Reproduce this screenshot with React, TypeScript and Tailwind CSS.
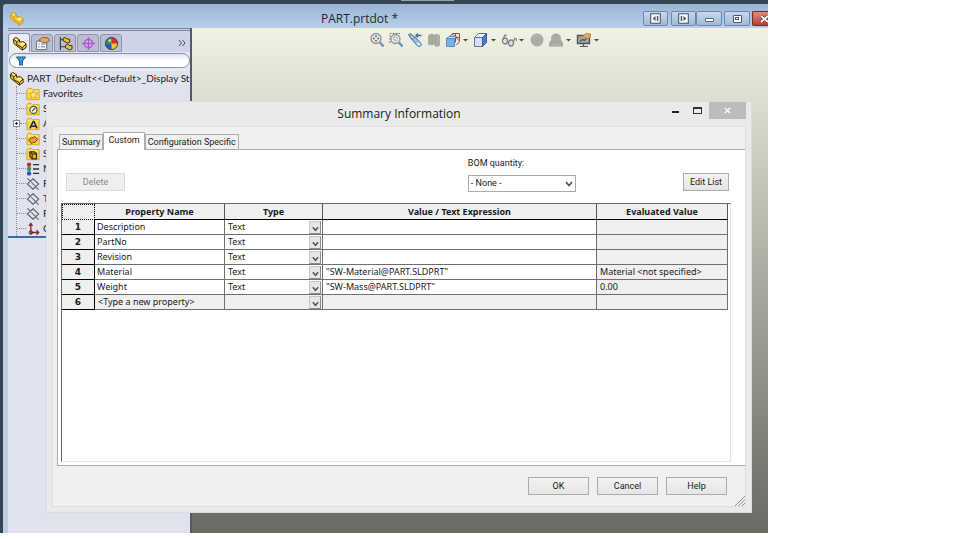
import type { ReactNode } from 'react'

type PropertyRow = {
  name: string
  type: string
  value: string
  evaluated: string
}

const properties: PropertyRow[] = [
  { name: 'Description', type: 'Text', value: '', evaluated: '' },
  { name: 'PartNo', type: 'Text', value: '', evaluated: '' },
  { name: 'Revision', type: 'Text', value: '', evaluated: '' },
  { name: 'Material', type: 'Text', value: '"SW-Material@PART.SLDPRT"', evaluated: 'Material <not specified>' },
  { name: 'Weight', type: 'Text', value: '"SW-Mass@PART.SLDPRT"', evaluated: '0.00' },
]

const treeItems = [
  { id: 'favorites', label: 'Favorites', icon: 'star' },
  { id: 'sensors', label: 'S', icon: 'sensor' },
  { id: 'annotations', label: 'A', icon: 'note', expandable: true },
  { id: 'surfaces', label: 'S', icon: 'surface' },
  { id: 'solids', label: 'S', icon: 'solid' },
  { id: 'material', label: 'M', icon: 'material' },
  { id: 'front', label: 'F', icon: 'plane' },
  { id: 'top', label: 'T', icon: 'plane' },
  { id: 'right', label: 'R', icon: 'plane' },
  { id: 'origin', label: 'O', icon: 'origin' },
]

function Svg({ children, size = 'size-4' }: { children: ReactNode; size?: string }) {
  return (
    <svg viewBox="0 0 16 16" className={`${size} shrink-0`} fill="none" aria-hidden="true">
      {children}
    </svg>
  )
}

function PartIcon({ dark = false, size }: { dark?: boolean; size?: string }) {
  const edge = dark ? '#2d2608' : '#d8961c'
  return (
    <Svg size={size}>
      <path d="M1.500 3.500 4 1.500l4 2.500v2.500l4-.5 3 2.500v4L11 15 2 8z" fill="#f3c52d" stroke={edge} strokeLinejoin="round" />
      <path d="M1.500 3.500 5 6l3-2M5 6v3l6 3.500 4-4M11 12.500V15" stroke={edge} />
      <path d="M3 3.500 4.200 2.500 7 4.200 5 5.200zM7.500 8l4.500-1 2 1.500-3 2.700z" fill="#ffea82" />
    </Svg>
  )
}

function FolderIcon({ children }: { children: ReactNode }) {
  return (
    <Svg size="size-[14px]">
      <path d="M1 3 2.500 1.500H6L7.500 3H15v11.500H1z" fill="#f8d648" stroke="#d0a223" />
      <path d="M2 4.500h12" stroke="#fff2a3" />
      {children}
    </Svg>
  )
}

function TreeIcon({ name }: { name: string }) {
  switch (name) {
    case 'star':
      return (
        <FolderIcon>
          <path d="m8.500 4 1.400 3 3.300.4-2.400 2.300.6 3.300-2.900-1.600L5.600 13l.6-3.300-2.400-2.300 3.300-.4z" fill="#ffe98a" stroke="#e09a1c" />
        </FolderIcon>
      )
    case 'sensor':
      return (
        <FolderIcon>
          <circle cx="8.500" cy="9" r="4" fill="#f6f2d0" stroke="#4c5664" strokeWidth="1.300" />
          <path d="m7 10.500 3.500-3.500" stroke="#3c4654" strokeWidth="1.400" />
        </FolderIcon>
      )
    case 'note':
      return (
        <FolderIcon>
          <path d="m4.500 13 3.700-8h1l3.300 8M6 10.500h5.500" stroke="#1b2350" strokeWidth="1.700" />
        </FolderIcon>
      )
    case 'surface':
      return (
        <FolderIcon>
          <path d="m3 9 3-2.500h2l1.500-1.500 4 3.500L10 12H8l-1.500 1.500z" fill="#f0982d" stroke="#5a3205" />
        </FolderIcon>
      )
    case 'solid':
      return (
        <FolderIcon>
          <path d="M4.500 5.500h5l2.500 2v6H7L4.500 11z" fill="#e8b622" stroke="#2b2404" strokeWidth="1.300" />
          <path d="M7 8h5M7 8v5M4.500 5.500 7 8" stroke="#2b2404" strokeWidth="1.200" />
        </FolderIcon>
      )
    case 'material':
      return (
        <Svg size="size-[14px]">
          <circle cx="3.500" cy="3" r="2.500" fill="#b92c44" />
          <circle cx="3.500" cy="8" r="2.500" fill="#2e9a4a" />
          <circle cx="3.500" cy="13" r="2.500" fill="#3548b8" />
          <path d="M8 3h7M8 8h7M8 13h7" stroke="#333" strokeWidth="1.500" />
        </Svg>
      )
    case 'plane':
      return (
        <Svg size="size-[14px]">
          <path d="m8 2 6.500 6L8 14 1.500 8zM1.500 1.500l3.500 3M11 11.500l3.500 3M6 6l4.500 4.500" stroke="#5d616c" strokeWidth="1.200" />
        </Svg>
      )
    default:
      return (
        <Svg size="size-[14px]">
          <path d="M5.500 14V2M5.500 12H14M3.500 4.500l2-3 2 3M12 9.500l2.500 2.500-2.500 2.500" stroke="#9c1c28" strokeWidth="1.500" />
          <circle cx="5.500" cy="12" r="2" stroke="#3b1a20" />
        </Svg>
      )
  }
}

const panelTabs = [
  {
    label: 'FeatureManager',
    icon: <PartIcon dark size="size-[15px]" />,
  },
  {
    label: 'PropertyManager',
    icon: (
      <Svg size="size-[15px]">
        <path d="M1.500 5.500h11v9h-11z" fill="#f4f6fb" stroke="#5d6780" />
        <path d="M3.500 8.500h1.500M3.500 11.500h1.500M6.500 8.500h4M6.500 11.500h4" stroke="#5674a8" />
        <path d="M4 4.500 8 1.500l6 .5 1.500 3-4 2.500-4-1z" fill="#e3a566" stroke="#8a5a2c" />
      </Svg>
    ),
  },
  {
    label: 'ConfigurationManager',
    icon: (
      <Svg size="size-[15px]">
        <path d="M2.500 1v14M2.500 4H6M2.500 11.500H8" stroke="#3a3a3a" strokeWidth="1.200" />
        <path d="m5.500 2.500 2-1 2 1.500 3 .5v3L10 7.500 5.500 5z" fill="#efc22f" stroke="#2e2709" />
        <path d="m8 10 2-1.500 2 1.500 3 .5v3L12.500 15 8 12.500z" fill="#efc22f" stroke="#2e2709" />
      </Svg>
    ),
  },
  {
    label: 'DimXpertManager',
    icon: (
      <Svg size="size-[15px]">
        <circle cx="8" cy="8" r="4.500" stroke="#b653cf" strokeWidth="1.400" />
        <path d="M8 1v14M1 8h14" stroke="#b653cf" strokeWidth="1.400" />
      </Svg>
    ),
  },
  {
    label: 'DisplayManager',
    icon: (
      <Svg size="size-[15px]">
        <circle cx="8" cy="8" r="6.500" fill="#f2c92c" />
        <path d="M8 8 1.500 8A6.500 6.500 0 0 1 8 1.500z" fill="#2b9448" />
        <path d="M8 8V1.500A6.500 6.500 0 0 1 14.500 8z" fill="#d92f2c" />
        <path d="M8 8 1.500 8A6.500 6.500 0 0 0 8 14.500z" fill="#3155c4" />
        <circle cx="8" cy="8" r="6.500" stroke="#3c3540" />
        <circle cx="6" cy="5" r="1.500" fill="#fff" opacity=".7" />
      </Svg>
    ),
  },
]

const viewTools = [
  {
    label: 'Zoom to Fit',
    icon: (
      <Svg>
        <circle cx="7" cy="6.500" r="5" fill="#e4e7e8" stroke="#8d9397" strokeWidth="1.300" />
        <path d="M7 3.500v1.500M7 8v1.500M4 6.500h1.500M8.500 6.500H10" stroke="#444c52" strokeWidth="1.500" />
        <path d="m11 10.500 3.500 4" stroke="#6c90bb" strokeWidth="2.400" />
      </Svg>
    ),
  },
  {
    label: 'Zoom to Area',
    icon: (
      <Svg>
        <path d="M2 11V1.500h10" stroke="#777" strokeDasharray="2 1" />
        <circle cx="7.500" cy="7" r="4.500" fill="#e4e7e8" stroke="#92989c" strokeWidth="1.300" />
        <path d="M6 5h3v3.500H6z" stroke="#8b9195" strokeDasharray="1 1" />
        <path d="m11 10.500 3.500 4" stroke="#6c90bb" strokeWidth="2.400" />
      </Svg>
    ),
  },
  {
    label: 'Previous View',
    icon: (
      <Svg>
        <path d="m1.500 2 4 6M3 1.500 8.500 6" stroke="#4d83ae" strokeWidth="1.400" />
        <path d="M5 7.500 8 5l6 6.500c1 2-1.500 4-3.500 2.500z" fill="#8fc2e6" stroke="#3c749f" />
        <path d="M9 3.500h5.500M11 1.500l-2 2 2 2" stroke="#3f719c" strokeWidth="1.300" />
        <circle cx="11.500" cy="12" r="1.500" fill="#e3f3fb" />
      </Svg>
    ),
  },
  {
    label: 'Section View',
    icon: (
      <Svg>
        <path d="M2 3.500c2-2 5-2 6-1 2-1 5-.5 6 1v10c-1 1-3 1.500-5 1v-2c-2 1-5 1-7 0z" fill="#adada6" />
        <path d="M6 3v9.500M9.500 4v10" stroke="#9c9c95" />
      </Svg>
    ),
  },
  {
    label: 'View Orientation',
    menu: true,
    icon: (
      <Svg>
        <path d="M5 4.500 7.500 1.500h7v8L11.500 13" fill="#ede7dc" stroke="#76584f" />
        <path d="M10.500 1.500v9M7 5.500h7.500M7.500 2l7 7" stroke="#a54c45" />
        <path d="M1.500 6.500h8v8h-8z" fill="#76b4e6" stroke="#5590c0" />
        <path d="m1.500 6.500 2-2h8l-2 2z" fill="#c3dff4" stroke="#5590c0" />
      </Svg>
    ),
  },
  {
    label: 'Display Style',
    menu: true,
    icon: (
      <Svg>
        <path d="M1.500 5.500h8v9h-8z" fill="#d0e2f7" stroke="#5f7696" />
        <path d="m1.500 5.500 4-4h8l-4 4z" fill="#f2f7fc" stroke="#5f7696" />
        <path d="m9.500 5.500 4-4v9l-4 4z" fill="#4a79d6" stroke="#3a5790" />
      </Svg>
    ),
  },
  {
    label: 'Hide/Show Items',
    menu: true,
    icon: (
      <Svg>
        <ellipse cx="4" cy="9" rx="2.500" ry="3" fill="#dce3e3" stroke="#7b8588" strokeWidth="1.300" />
        <ellipse cx="10" cy="11" rx="2.500" ry="3" fill="#dce3e3" stroke="#7b8588" strokeWidth="1.300" />
        <path d="M6 9.500 8 10M2 7.500l2-4.500 2 .5M12.500 10l1-3.500 2 .5v2" stroke="#7b8588" strokeWidth="1.200" />
      </Svg>
    ),
  },
  {
    label: 'Edit Appearance',
    icon: (
      <Svg>
        <circle cx="8" cy="8" r="6.500" fill="#acaca5" />
        <path d="M4 5.500c2-2.500 6-2.500 8 0" stroke="#bcbcb5" />
      </Svg>
    ),
  },
  {
    label: 'Apply Scene',
    menu: true,
    icon: (
      <Svg>
        <circle cx="8" cy="6.500" r="5" fill="#acaca5" />
        <path d="M3 8h10l2 3v3.500H1V11z" fill="#a8a8a1" />
        <path d="M4 12.500h8" stroke="#bcbcb5" />
      </Svg>
    ),
  },
  {
    label: 'View Settings',
    menu: true,
    icon: (
      <Svg>
        <path d="M1.500 3.500h12v8h-12z" fill="#a3a8a5" stroke="#4e5557" strokeWidth="1.400" />
        <path d="M4 14.500h8M7.500 12v2M4 9.500l2.500-2 2 1L11 6" stroke="#4f5555" strokeWidth="1.200" />
        <path d="m7 4 3-2.500 4.500.5v3L11 6.500z" fill="#eca860" stroke="#b98a4c" />
      </Svg>
    ),
  },
]

const dialogTabs = ['Summary', 'Custom', 'Configuration Specific']

function ChevronIcon({ className }: { className: string }) {
  return (
    <svg viewBox="0 0 8 6" className={className} fill="none" aria-hidden="true">
      <path d="m1 1 3 3.500L7 1" stroke="#505050" strokeWidth="1.600" />
    </svg>
  )
}

function DialogButton({ children }: { children: ReactNode }) {
  return (
    <button
      type="button"
      className="h-[18px] w-[61px] border border-[#acacac] bg-linear-to-b from-[#f2f2f2] to-[#e5e5e5] text-[9px] leading-none"
    >
      {children}
    </button>
  )
}

function TitleBar() {
  const control =
    'flex h-[15px] items-center justify-center rounded-[2px] border border-[#6f88a8] bg-linear-to-b from-[#c6d8ec] to-[#9ebad8]'
  return (
    <header className="flex h-[24px] shrink-0 items-center overflow-hidden rounded-tl-[4px] bg-linear-to-b from-[#9ab5d6] to-[#b7cfe9] pt-[5px] pl-1.5">
      <PartIcon size="size-[15px]" />
      <h1 className="min-w-0 flex-1 truncate pl-[52px] text-center text-[12px] leading-4 text-[#1c2838]">
        PART.prtdot *
      </h1>
      <div className="flex items-center">
        <button type="button" aria-label="Previous pane" className={`${control} mr-[3px] w-[25px]`}>
          <Svg size="size-[11px]">
            <path d="M1 1h14v14H1z" fill="#f5f7fa" stroke="#465166" strokeWidth="1.500" />
            <path d="m8 4.500-4 3.500 4 3.500zM10 4.500h2v7h-2z" fill="#465166" />
          </Svg>
        </button>
        <button type="button" aria-label="Next pane" className={`${control} w-[25px]`}>
          <Svg size="size-[11px]">
            <path d="M1 1h14v14H1z" fill="#f5f7fa" stroke="#465166" strokeWidth="1.500" />
            <path d="m8 4.500 4 3.500-4 3.500zM4 4.500h2v7H4z" fill="#465166" />
          </Svg>
        </button>
        <button type="button" aria-label="Minimize" className={`${control} mr-0.5 w-[26px]`}>
          <span className="mt-0.5 h-1 w-[9px] rounded-[1px] border border-[#5a6577] bg-white" />
        </button>
        <button type="button" aria-label="Restore" className={`${control} mr-0.5 w-[26px]`}>
          <span className="flex h-[8px] w-[9px] items-center justify-center rounded-[1px] border border-[#4b566a] bg-white">
            <span className="h-[3px] w-[4px] border border-[#4b566a]" />
          </span>
        </button>
        <button
          type="button"
          aria-label="Close"
          className="flex h-[15px] w-[16px] items-center justify-end overflow-hidden rounded-l-[2px] border border-r-0 border-[#6b2f30] bg-linear-to-b from-[#dd8d80] to-[#b8402d]"
        >
          <svg viewBox="0 0 8 8" className="size-[8px]" aria-hidden="true">
            <path d="m1 1 7 6M8 1 1 7" stroke="#5c2b2b" strokeWidth="3" />
            <path d="m1 1 7 6M8 1 1 7" stroke="#fff" strokeWidth="1.800" />
          </svg>
        </button>
      </div>
    </header>
  )
}

function FeaturePanel() {
  return (
    <aside className="flex w-[184px] shrink-0 flex-col border-r-2 border-[#55596a] bg-[#e0e3ee]">
      <div className="h-[3px] border-y border-[#7b88a3] bg-[#c9cfe0]" />
      <div className="flex items-end bg-[#cfd3e6] pt-0.5">
        {panelTabs.map((tab, index) => (
          <button
            key={tab.label}
            type="button"
            aria-label={tab.label}
            className={
              index === 0
                ? 'flex h-[19px] w-[22px] items-center justify-center rounded-t-[3px] border border-b-0 border-[#8c93a8] bg-[#eceef6]'
                : 'ml-px flex h-[18px] w-[22px] items-center justify-center rounded-t-[3px] border border-[#9197aa] bg-[#b9bfd3]'
            }
          >
            {tab.icon}
          </button>
        ))}
        <button type="button" aria-label="Expand panel" className="mr-1 mb-[5px] ml-auto">
          <svg viewBox="0 0 8 8" className="size-[8px]" fill="none" aria-hidden="true">
            <path d="m1 1 2.500 3L1 7M4.500 1 7 4 4.500 7" stroke="#4a5060" />
          </svg>
        </button>
      </div>
      <div className="bg-[#e6e9f3] pt-px pb-[3px] pl-px">
        <label className="flex h-[15px] items-center rounded-full border border-[#8b90a0] bg-linear-to-b from-[#dfe3ee] via-white to-white pl-1.5">
          <svg viewBox="0 0 10 10" className="size-[10px]" aria-hidden="true">
            <path d="M.5 1h9L6.500 5v4h-3V5z" fill="#3d95dc" stroke="#1c568f" />
          </svg>
          <input type="text" aria-label="Filter" className="min-w-0 flex-1 text-[10px] outline-none" />
        </label>
      </div>
      <div className="border-b-2 border-[#3d6ba8] font-[Lato,sans-serif] text-[10px] leading-[15px] text-[#1e222b]">
        <div className="flex items-center gap-[3px] pl-px whitespace-pre">
          <PartIcon dark size="size-[15px]" />
          <span>{'PART  (Default<<Default>_Display St'}</span>
        </div>
        <ul className="ml-2 border-l border-dotted border-[#8a8e9a]">
          {treeItems.map((item) => (
            <li key={item.id} className="flex h-[15px] items-center whitespace-nowrap">
              {item.expandable ? (
                <button
                  type="button"
                  aria-label="Expand"
                  className="relative -ml-1 flex size-[7px] items-center justify-center border border-[#8a8e9a] bg-white"
                >
                  <span className="absolute h-px w-[3px] bg-[#333]" />
                  <span className="absolute h-[3px] w-px bg-[#333]" />
                </button>
              ) : null}
              <span
                className={
                  item.expandable
                    ? 'w-[6px] border-t border-dotted border-[#8a8e9a]'
                    : 'w-[9px] border-t border-dotted border-[#8a8e9a]'
                }
              />
              <span className="mr-[3px] flex w-[14px] justify-center">
                <TreeIcon name={item.icon} />
              </span>
              {item.label}
            </li>
          ))}
        </ul>
      </div>
    </aside>
  )
}

function Viewport() {
  return (
    <main className="min-w-0 flex-1 bg-linear-to-b from-[#f1f1e4] via-[#aaaaa0] to-[#6a6a65]">
      <div className="flex justify-center gap-[3px] pt-1 pl-[10px]">
        {viewTools.map((tool) => (
          <button key={tool.label} type="button" aria-label={tool.label} className="flex items-center">
            {tool.icon}
            {tool.menu && (
              <svg viewBox="0 0 9 4" className="h-[4px] w-[9px]" aria-hidden="true">
                <path d="M2 1h5L4.500 3.500z" fill="#4a4a4a" />
              </svg>
            )}
          </button>
        ))}
      </div>
    </main>
  )
}

function TypeSelect({ value, row }: { value: string; row: number }) {
  return (
    <div className="relative h-[14px]">
      <select
        aria-label={`Type of property ${row}`}
        defaultValue={value}
        className="h-full w-full appearance-none pl-[3px] leading-[14px] outline-none"
      >
        <option value={value}>{value}</option>
      </select>
      <span className="pointer-events-none absolute top-px right-px flex h-[13px] w-[12px] items-center justify-center border border-t-[#c8c8c8] border-r-[#8c8c8c] border-b-[#8c8c8c] border-l-[#c8c8c8] bg-[#e6e6e6]">
        <ChevronIcon className="mt-0.5 h-[6px] w-[7px]" />
      </span>
    </div>
  )
}

function PropertyTable() {
  const head = 'border-r border-b border-r-[#555] border-b-black p-0 font-bold'
  const cell = 'h-[15px] border-r border-b border-[#6f6f6f] p-0'
  const rowHead = "border-r border-b border-black bg-[#efefef] p-0 font-['DejaVu_Sans',sans-serif]"
  return (
    <table className="w-full table-fixed border-separate border-spacing-0 font-['Noto_Sans',sans-serif] text-[9px] leading-[14px] text-[#1a1a1a]">
      <colgroup>
        <col className="w-[33px]" />
        <col className="w-[130px]" />
        <col className="w-[98px]" />
        <col />
        <col className="w-[131px]" />
      </colgroup>
      <thead>
        <tr className="h-[16px] bg-[#efefef]">
          <th className="border border-dotted border-black p-0" aria-label="Row" />
          <th className={head}>Property Name</th>
          <th className={head}>Type</th>
          <th className={head}>Value / Text Expression</th>
          <th className={head}>Evaluated Value</th>
        </tr>
      </thead>
      <tbody>
        {properties.map((row, index) => (
          <tr key={row.name}>
            <th className={rowHead}>{index + 1}</th>
            <td className={`${cell} pl-0.5`}>{row.name}</td>
            <td className={cell}>
              <TypeSelect value={row.type} row={index + 1} />
            </td>
            <td className={`${cell} pl-[3px]`}>{row.value}</td>
            <td className={`${cell} bg-[#efefef] pl-[3px]`}>{row.evaluated}</td>
          </tr>
        ))}
        <tr className="bg-[#efefef]">
          <th className={rowHead}>6</th>
          <td className={`${cell} pl-[3px]`}>{'<Type a new property>'}</td>
          <td className={cell}>
            <TypeSelect value="" row={6} />
          </td>
          <td className={cell} />
          <td className={cell} />
        </tr>
      </tbody>
    </table>
  )
}

function SummaryDialog() {
  return (
    <section
      role="dialog"
      aria-labelledby="dialog-title"
      className="absolute top-[101px] right-[16px] bottom-[20px] left-[46px] flex flex-col border border-[#dcdcdc] bg-[#eaeaea] px-[5px] pb-[5px] font-[Roboto,sans-serif] text-[#1a1a1a]"
    >
      <div className="grid h-[24px] shrink-0 grid-cols-[1fr_auto_1fr] items-center">
        <h2 id="dialog-title" className="col-start-2 font-['Open_Sans',sans-serif] text-[12px] leading-4">
          Summary Information
        </h2>
        <div className="flex h-full items-start justify-end">
          <button type="button" aria-label="Minimize" className="flex h-[16px] w-[20px] items-center justify-center">
            <span className="mt-1 h-[2px] w-[7px] bg-[#222]" />
          </button>
          <button type="button" aria-label="Maximize" className="flex h-[16px] w-[24px] items-center justify-center">
            <span className="h-[7px] w-[9px] border border-t-2 border-[#333]" />
          </button>
          <button type="button" aria-label="Close" className="flex h-[17px] w-[37px] items-center justify-center bg-[#bcbcbc]">
            <svg viewBox="0 0 8 8" className="size-[7px]" aria-hidden="true">
              <path d="m1 1 6 6M7 1 1 7" stroke="#fff" strokeWidth="1.600" />
            </svg>
          </button>
        </div>
      </div>

      <div className="flex min-h-0 flex-1 flex-col border border-[#dedede] bg-[#f0f0f0] pl-[4px]">
        <div role="tablist" className="flex h-[22px] shrink-0 items-end pl-0.5 text-[9px] leading-none">
          {dialogTabs.map((tab) => (
            <button
              key={tab}
              type="button"
              role="tab"
              aria-selected={tab === 'Custom'}
              className={
                tab === 'Custom'
                  ? 'z-10 -mb-px h-[18px] border border-b-0 border-[#acacac] bg-white px-1 pb-0.5'
                  : 'h-[15px] border border-b-0 border-[#acacac] bg-[#f0f0f0] px-0.5'
              }
            >
              {tab}
            </button>
          ))}
        </div>

        {/* Custom properties page */}
        <div
          role="tabpanel"
          className="flex min-h-0 flex-1 flex-col border-y border-l border-[#acacac] bg-white pt-[7px] pr-[14px] pb-[3px] pl-[3px] text-[9px]"
        >
          <div className="mb-[11px] flex items-start pr-0.5 pl-[5px]">
            <button
              type="button"
              disabled
              className="mt-[16px] h-[18px] w-[59px] border border-[#dadada] bg-[#efefef] leading-none text-[#8a8a8a]"
            >
              Delete
            </button>
            <div className="flex-[16]" />
            <div className="flex w-[108px] flex-col">
              <label htmlFor="bom-quantity" className="mb-[6px] leading-3">
                BOM quantity:
              </label>
              <div className="relative">
                <select
                  id="bom-quantity"
                  className="block h-[17px] w-full appearance-none border border-[#acacac] bg-white pl-0.5 leading-[15px] outline-none"
                >
                  <option>- None -</option>
                </select>
                <ChevronIcon className="pointer-events-none absolute top-[6px] right-[3px] h-[6px] w-[8px]" />
              </div>
            </div>
            <div className="flex-[5]" />
            <button
              type="button"
              className="mt-[16px] h-[18px] w-[46px] border border-[#acacac] bg-linear-to-b from-[#f2f2f2] to-[#e5e5e5] leading-none"
            >
              Edit List
            </button>
          </div>

          <div className="min-h-0 flex-1 overflow-hidden border border-t-[#6a6a6a] border-r-[#e3e3e3] border-b-[#e3e3e3] border-l-[#6a6a6a] pr-0.5">
            <PropertyTable />
          </div>
        </div>

        <div className="flex h-[40px] shrink-0">
          <div className="flex flex-1 justify-end gap-[8px] pt-[11px] pr-[8px]">
            <DialogButton>OK</DialogButton>
            <DialogButton>Cancel</DialogButton>
            <DialogButton>Help</DialogButton>
          </div>
          <svg viewBox="0 0 10 10" className="size-[10px] self-end" aria-hidden="true">
            <path d="M0 10 10 0M3.500 10 10 3.500M7 10l3-3" stroke="#8f8f8f" />
          </svg>
        </div>
      </div>
    </section>
  )
}

export default function App() {
  return (
    <div className="h-screen bg-white pb-[7px] font-['Open_Sans',sans-serif]">
      <div className="relative flex h-full w-4/5 flex-col overflow-hidden bg-[#364553] pl-[3px]">
        <div className="flex h-[4px] shrink-0 justify-center pl-[84px]">
          <div className="h-px w-[53px] bg-[#8fa5a8]" />
        </div>
        <div className="flex min-h-0 flex-1 flex-col rounded-tl-[4px] bg-[#b9d0e8]">
          <TitleBar />
          <div className="flex min-h-0 flex-1 pl-[5px]">
            <FeaturePanel />
            <Viewport />
          </div>
        </div>
        <SummaryDialog />
      </div>
    </div>
  )
}
